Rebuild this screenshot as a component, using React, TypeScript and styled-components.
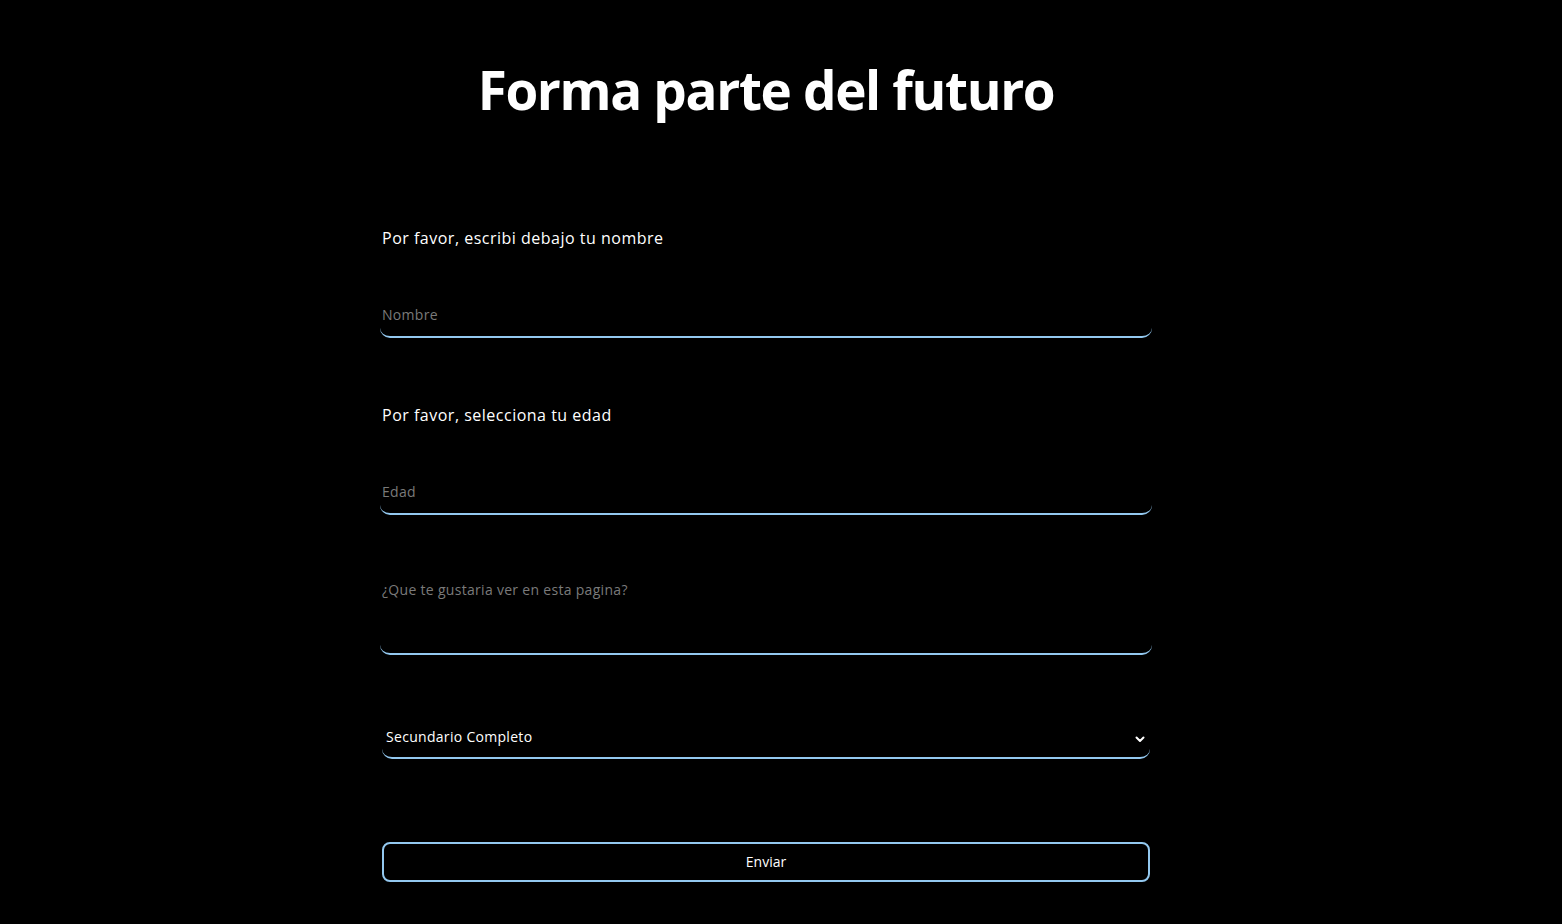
import React from "react";
import styled, { createGlobalStyle } from "styled-components";

const GlobalStyle = createGlobalStyle`
  html, body {
    margin: 0;
    padding: 0;
    background: #000000;
  }
  body {
    font-family: "Open Sans", "Noto Sans", Arial, sans-serif;
    color: #ffffff;
  }
  * { box-sizing: border-box; }
`;

const ACCENT = "#93c8ef";

const Page = styled.main`
  width: 1532px;
  min-height: 924px;
  display: flex;
  flex-direction: column;
  align-items: center;
  padding-top: 57px;
`;

const Title = styled.h1`
  margin: 0;
  font-family: "Open Sans", "Noto Sans", sans-serif;
  font-weight: 700;
  font-size: 53px;
  line-height: 65px;
  letter-spacing: -1.35px;
  color: #ffffff;
`;

const Form = styled.form`
  width: 772px;
  margin-top: 104px;
  display: flex;
  flex-direction: column;
`;

const Field = styled.div<{ $gap: number }>`
  display: flex;
  flex-direction: column;
  margin-top: ${(p) => p.$gap}px;
`;

const Label = styled.label`
  font-size: 16px;
  line-height: 24px;
  font-weight: 400;
  letter-spacing: 0.5px;
  color: #ffffff;
  padding-left: 2px;
  margin-bottom: 44px;
`;

const underline = `
  background: transparent;
  border: none;
  border-bottom: 2px solid ${ACCENT};
  border-radius: 0 0 10px 10px;
  color: #ffffff;
  outline: none;
  font-family: "Open Sans", "Noto Sans", sans-serif;
  font-size: 14px;
  letter-spacing: 0.3px;
  line-height: 20px;
  &::placeholder { color: #7a7a7a; }
`;

const TextInput = styled.input`
  ${underline}
  width: 100%;
  height: 44px;
  padding: 10px 2px 12px;
`;

const TextArea = styled.textarea`
  ${underline}
  width: 100%;
  height: 85px;
  padding: 10px 2px 12px;
  resize: none;
`;

const SelectWrap = styled.div`
  position: relative;
  margin: 64px 2px 0;
`;

const Select = styled.select`
  ${underline}
  appearance: none;
  -webkit-appearance: none;
  width: 100%;
  height: 40px;
  padding: 8px 4px 10px;
  font-weight: 500;
  cursor: pointer;
  option { background: #000; color: #fff; }
`;

const Chevron = styled.svg`
  position: absolute;
  right: 5px;
  top: 17px;
  width: 10px;
  height: 7px;
  pointer-events: none;
`;

const SubmitButton = styled.button`
  margin: 83px 2px 0;
  height: 40px;
  padding: 0 0 2px;
  background: transparent;
  border: 2px solid ${ACCENT};
  border-radius: 8px;
  color: #ffffff;
  font-family: "Open Sans", "Noto Sans", sans-serif;
  font-size: 14px;
  font-weight: 500;
  cursor: pointer;
`;

export default function App() {
  return (
    <>
      <GlobalStyle />
      <Page>
        <Title>Forma parte del futuro</Title>
        <Form onSubmit={(e) => e.preventDefault()}>
          <Field $gap={0}>
            <Label htmlFor="nombre">Por favor, escribi debajo tu nombre</Label>
            <TextInput id="nombre" type="text" placeholder="Nombre" />
          </Field>
          <Field $gap={65}>
            <Label htmlFor="edad">Por favor, selecciona tu edad</Label>
            <TextInput id="edad" type="text" placeholder="Edad" />
          </Field>
          <Field $gap={55}>
            <TextArea placeholder="¿Que te gustaria ver en esta pagina?" />
          </Field>
          <SelectWrap>
            <Select defaultValue="sc">
              <option value="sc">Secundario Completo</option>
              <option value="si">Secundario Incompleto</option>
              <option value="uc">Universitario Completo</option>
            </Select>
            <Chevron viewBox="0 0 10 7" fill="none">
              <path d="M1.5 1.5 L5 5 L8.5 1.5" stroke="#ffffff" strokeWidth="2" strokeLinecap="round" strokeLinejoin="round" />
            </Chevron>
          </SelectWrap>
          <SubmitButton type="submit">Enviar</SubmitButton>
        </Form>
      </Page>
    </>
  );
}
